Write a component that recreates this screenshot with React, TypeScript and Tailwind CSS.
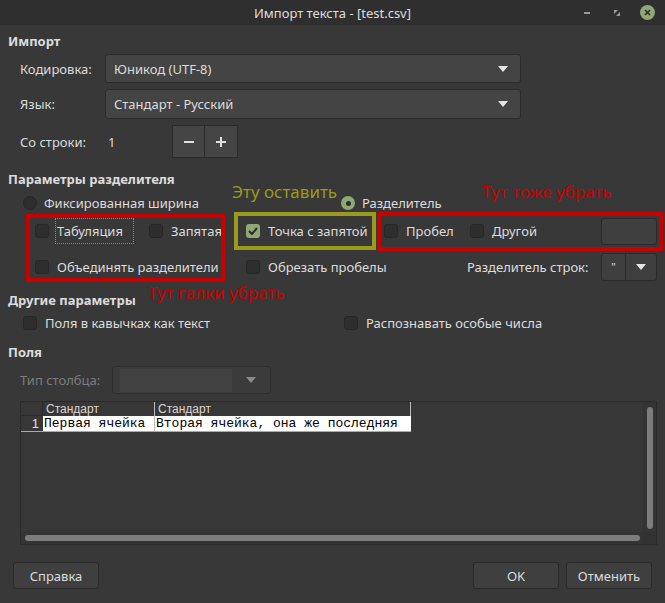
import React from "react";

const font = { fontFamily: '"Noto Sans", "Open Sans", sans-serif' };

function Arrow() {
  return (
    <svg width="10" height="6" viewBox="0 0 10 6" className="shrink-0">
      <path d="M0 0 L10 0 L5 6 Z" fill="#e6e6e6" />
    </svg>
  );
}

function Check({ checked = false }: { checked?: boolean }) {
  if (checked) {
    return (
      <span className="flex h-[14px] w-[14px] shrink-0 items-center justify-center rounded-[3px] bg-[#8fa876]">
        <svg width="10" height="8" viewBox="0 0 10 8">
          <path d="M1 4 L4 7 L9 1" stroke="#2c2c2c" strokeWidth="2" fill="none" />
        </svg>
      </span>
    );
  }
  return <span className="h-[14px] w-[14px] shrink-0 rounded-[3px] border border-[#272727] bg-[#2e2e2e]" />;
}

function Radio({ checked = false }: { checked?: boolean }) {
  if (checked) {
    return (
      <span className="flex h-[14px] w-[14px] shrink-0 items-center justify-center rounded-full bg-[#8fa876]">
        <span className="h-[5px] w-[5px] rounded-full bg-[#2c2c2c]" />
      </span>
    );
  }
  return <span className="h-[14px] w-[14px] shrink-0 rounded-full border border-[#272727] bg-[#2e2e2e]" />;
}

function Item({ w, checked, children }: { w: string; checked?: boolean; children: React.ReactNode }) {
  return (
    <div className={`flex items-center gap-2 ${w}`}>
      <Check checked={checked} />
      <span>{children}</span>
    </div>
  );
}

function Button({ w, children }: { w: string; children: React.ReactNode }) {
  return (
    <div className={`flex h-[27px] ${w} items-center justify-center rounded-[3px] border border-[#2a2a2a] bg-[#3f3f3f]`}>
      {children}
    </div>
  );
}

export default function App() {
  return (
    <div
      className="relative flex h-[603px] w-[665px] flex-col overflow-hidden bg-[#383838] text-[13px] leading-[16px] text-[#dcdcdc]"
      style={font}
    >
      {/* title bar */}
      <div className="relative flex h-[25px] shrink-0 items-center justify-center bg-[#2f2f2f] text-[13px] text-[#dedede]">
        <span>Импорт текста - [test.csv]</span>
        <div className="absolute right-[10px] top-0 flex h-[25px] items-center">
          <span className="mr-[24px] h-[2px] w-[6px] bg-[#9a9a9a]" />
          <svg width="6" height="6" viewBox="0 0 6 6" className="mr-[20px]">
            <path d="M0 0 H4 L0 4 Z M6 6 H2 L6 2 Z" fill="#9a9a9a" />
          </svg>
          <span className="flex h-[15px] w-[15px] items-center justify-center rounded-full bg-[#8fa876]">
            <svg width="7" height="7" viewBox="0 0 7 7">
              <path d="M1 1 L6 6 M6 1 L1 6" stroke="#2b2b2b" strokeWidth="1.6" />
            </svg>
          </span>
        </div>
      </div>

      <div className="flex flex-col pl-2 pt-2">
        <div className="font-bold">Импорт</div>

        <div className="ml-[12px] mt-[5px] flex flex-col gap-[6px]">
          <div className="flex h-[29px] items-center">
            <span className="w-[85px]">Кодировка:</span>
            <div className="flex h-[29px] w-[416px] items-center justify-between rounded-[3px] border border-[#2b2b2b] bg-[#444444] pl-[8px] pr-[12px]">
              <span>Юникод (UTF-8)</span>
              <Arrow />
            </div>
          </div>
          <div className="flex h-[30px] items-center">
            <span className="w-[85px]">Язык:</span>
            <div className="flex h-[30px] w-[416px] items-center justify-between rounded-[3px] border border-[#2b2b2b] bg-[#444444] pl-[8px] pr-[12px]">
              <span>Стандарт - Русский</span>
              <Arrow />
            </div>
          </div>
          <div className="flex h-[33px] items-center">
            <span className="w-[88px]">Со строки:</span>
            <span className="w-[64px]">1</span>
            <div className="flex h-[33px]">
              <div className="flex w-[33px] items-center justify-center border border-[#2b2b2b] bg-[#454545]">
                <span className="h-[2px] w-[10px] bg-[#e0e0e0]" />
              </div>
              <div className="flex w-[33px] items-center justify-center border border-l-0 border-[#2b2b2b] bg-[#454545]">
                <svg width="10" height="10" viewBox="0 0 10 10">
                  <path d="M5 0 V10 M0 5 H10" stroke="#e0e0e0" strokeWidth="2" />
                </svg>
              </div>
            </div>
          </div>
        </div>

        <div className="mt-[13px] font-bold">Параметры разделителя</div>
        <div className="ml-[15px] mt-[6px] flex h-[20px] items-center">
          <div className="flex w-[318px] items-center gap-[7px]">
            <Radio />
            <span>Фиксированная ширина</span>
          </div>
          <div className="flex items-center gap-[7px]">
            <Radio checked />
            <span>Разделитель</span>
          </div>
        </div>
      </div>

      <div className="mt-[4px] flex h-[28px] items-center pl-[35px]">
        <div className="flex w-[114px] items-center gap-2">
          <Check />
          <span className="-mx-[2px] border border-dotted border-[#8a8a8a] px-[1px] py-[4px] pr-[10px]">Табуляция</span>
        </div>
        <Item w="w-[97px]">Запятая</Item>
        <Item w="w-[138px]" checked>
          Точка с запятой
        </Item>
        <Item w="w-[86px]">Пробел</Item>
        <Item w="w-[131px]">Другой</Item>
        <div className="h-[27px] w-[56px] rounded-[3px] border border-[#2b2b2b] bg-[#3f3f3f]" />
      </div>

      <div className="mt-[8px] flex h-[28px] items-center pl-[35px]">
        <Item w="w-[211px]">Объединять разделители</Item>
        <Item w="w-[221px]">Обрезать пробелы</Item>
        <span className="w-[134px]">Разделитель строк:</span>
        <div className="flex h-[28px] w-[56px] rounded-[3px] border border-[#2b2b2b] bg-[#3f3f3f]">
          <div className="flex w-[24px] items-center justify-center border-r border-[#2b2b2b] text-[11px]">"</div>
          <div className="flex flex-1 items-center justify-center">
            <Arrow />
          </div>
        </div>
      </div>

      <div className="flex flex-col pl-2">
        <div className="mt-[11px] font-bold">Другие параметры</div>
        <div className="ml-[15px] mt-[5px] flex h-[20px] items-center">
          <Item w="w-[321px]">Поля в кавычках как текст</Item>
          <Item w="w-auto">Распознавать особые числа</Item>
        </div>

        <div className="mt-[11px] font-bold">Поля</div>
        <div className="ml-[12px] mt-[6px] flex h-[28px] items-center">
          <span className="w-[92px] text-[#7c7c7c]">Тип столбца:</span>
          <div className="flex h-[28px] w-[159px] items-center justify-between rounded-[3px] border border-[#2e2e2e] bg-[#3b3b3b] pl-[7px] pr-[14px]">
            <div className="h-[23px] w-[112px] bg-[#424242]" />
            <svg width="10" height="6" viewBox="0 0 10 6">
              <path d="M0 0 L10 0 L5 6 Z" fill="#8a8a8a" />
            </svg>
          </div>
        </div>

        {/* preview grid */}
        <div
          className="ml-[12px] mt-[7px] flex h-[144px] w-[637px] border border-[#2a2a2a] bg-[#373737]"
          style={{ fontFamily: '"Liberation Sans", sans-serif' }}
        >
          <div className="flex flex-1 flex-col">
            <div className="flex h-[14px] text-[12px] leading-[14px] text-[#d6d6d6]">
              <div className="w-[22px] border-b border-r border-[#2a2a2a]" />
              <div className="w-[112px] border-r border-[#bdbdbd] pl-[3px]">Стандарт</div>
              <div className="w-[256px] border-r border-[#bdbdbd] pl-[3px]">Стандарт</div>
            </div>
            <div className="flex h-[16px] text-[13px] leading-[16px]">
              <div className="w-[22px] border-b border-[#aaaaaa] pr-[4px] text-right text-[#e0e0e0]">1</div>
              <div
                className="flex w-[368px] border-b border-[#aaaaaa] bg-white text-black"
                style={{ fontFamily: '"Liberation Mono", monospace' }}
              >
                <span className="w-[112px] border-r border-[#bdbdbd] pl-[1px]">Первая ячейка</span>
                <span className="pl-[1px]">Вторая ячейка, она же последняя</span>
              </div>
            </div>
            <div className="flex-1" />
            <div className="flex h-[12px] items-center bg-[#343434] pl-[4px] pr-[3px]">
              <div className="h-[6px] flex-1 rounded-full bg-[#7c7c7c]" />
            </div>
          </div>
          <div className="flex w-[13px] flex-col">
            <div className="flex flex-1 justify-center bg-[#343434] pb-[3px] pt-[5px]">
              <div className="w-[6px] rounded-full bg-[#7c7c7c]" />
            </div>
            <div className="h-[12px] bg-[#323232]" />
          </div>
        </div>
      </div>

      <div className="mt-[17px] flex px-[13px]">
        <Button w="w-[86px]">Справка</Button>
        <div className="flex-1" />
        <Button w="w-[86px]">OK</Button>
        <div className="w-[7px]" />
        <Button w="w-[86px]">Отменить</Button>
      </div>

      {/* annotations */}
      <div className="absolute left-[26px] top-[214px] h-[68px] w-[199px] border-4 border-[#c80000]" />
      <div className="absolute left-[234px] top-[212px] h-[38px] w-[142px] border-4 border-[#9a9a1c]" />
      <div className="absolute left-[377px] top-[212px] h-[39px] w-[286px] border-4 border-[#c80000]" />
      <div className="absolute left-[232px] top-[181px] text-[17px] leading-[22px] text-[#9a9a1c]">Эту оставить</div>
      <div className="absolute left-[482px] top-[181px] text-[17px] leading-[22px] text-[#c80000]">Тут тоже убрать</div>
      <div className="absolute left-[148px] top-[282px] text-[17px] leading-[22px] text-[#c80000]">Тут галки убрать</div>
    </div>
  );
}
